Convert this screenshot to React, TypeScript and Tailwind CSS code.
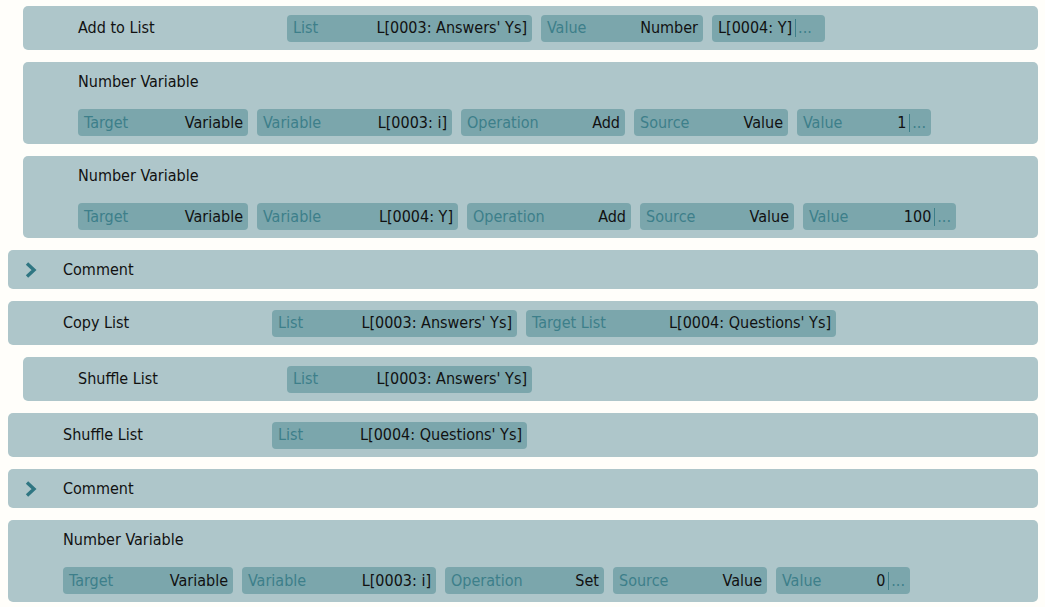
/**
 * Script editor - a list of action blocks with their parameter chips
 */

type Chip = {
  label?: string;
  value: string;
  more?: boolean;
  width: string;
};

type Block =
  | { kind: 'inline'; title: string; nested?: boolean; chips: Chip[] }
  | { kind: 'stacked'; title: string; nested?: boolean; chips: Chip[] }
  | { kind: 'comment'; title: string };

const numberChips = (variable: string, op: string, value: string, widths: string[]): Chip[] => [
  { label: 'Target', value: 'Variable', width: widths[0] },
  { label: 'Variable', value: variable, width: widths[1] },
  { label: 'Operation', value: op, width: widths[2] },
  { label: 'Source', value: 'Value', width: widths[3] },
  { label: 'Value', value, more: true, width: widths[4] },
];

const blocks: Block[] = [
  {
    kind: 'inline',
    title: 'Add to List',
    nested: true,
    chips: [
      { label: 'List', value: "L[0003: Answers' Ys]", width: 'w-[245px]' },
      { label: 'Value', value: 'Number', width: 'w-[162px]' },
      { value: 'L[0004: Y]', more: true, width: 'w-[113px]' },
    ],
  },
  {
    kind: 'stacked',
    title: 'Number Variable',
    nested: true,
    chips: numberChips('L[0003: i]', 'Add', '1', ['w-[170px]', 'w-[195px]', 'w-[164px]', 'w-[154px]', 'w-[134px]']),
  },
  {
    kind: 'stacked',
    title: 'Number Variable',
    nested: true,
    chips: numberChips('L[0004: Y]', 'Add', '100', ['w-[170px]', 'w-[201px]', 'w-[164px]', 'w-[154px]', 'w-[153px]']),
  },
  { kind: 'comment', title: 'Comment' },
  {
    kind: 'inline',
    title: 'Copy List',
    chips: [
      { label: 'List', value: "L[0003: Answers' Ys]", width: 'w-[245px]' },
      { label: 'Target List', value: "L[0004: Questions' Ys]", width: 'w-[310px]' },
    ],
  },
  {
    kind: 'inline',
    title: 'Shuffle List',
    nested: true,
    chips: [{ label: 'List', value: "L[0003: Answers' Ys]", width: 'w-[245px]' }],
  },
  {
    kind: 'inline',
    title: 'Shuffle List',
    chips: [{ label: 'List', value: "L[0004: Questions' Ys]", width: 'w-[255px]' }],
  },
  { kind: 'comment', title: 'Comment' },
  {
    kind: 'stacked',
    title: 'Number Variable',
    chips: numberChips('L[0003: i]', 'Set', '0', ['w-[170px]', 'w-[194px]', 'w-[159px]', 'w-[154px]', 'w-[134px]']),
  },
];

function ParamChip({ chip }: { chip: Chip }) {
  return (
    <div
      className={`${chip.width} h-[27px] shrink-0 flex items-center justify-between rounded-[4px] bg-[#7ba6ac] pl-[6px] pr-[5px] whitespace-nowrap`}
    >
      {chip.label && <span className="text-[#3d7f8a]">{chip.label}</span>}
      <span className="flex items-center text-[#111]">
        {chip.value}
        {chip.more && (
          <>
            <span className="ml-[3px] mr-[2px] h-[18px] w-px bg-[#3d7f8a]" />
            <span className="text-[#3d7f8a]">...</span>
          </>
        )}
      </span>
    </div>
  );
}

function Chevron() {
  return (
    <svg width="12" height="16" viewBox="0 0 12 16" className="shrink-0">
      <polyline points="2,1.5 9,8 2,14.5" fill="none" stroke="#2f7682" strokeWidth="3.4" />
    </svg>
  );
}

function BlockRow({ block }: { block: Block }) {
  if (block.kind === 'comment') {
    return (
      <div className="h-[39px] flex items-center rounded-[5px] bg-[#aec6ca] pl-[17px]">
        <Chevron />
        <span className="ml-[26px] text-[#111]">{block.title}</span>
      </div>
    );
  }

  const indent = block.nested ? 'ml-[15px]' : '';

  if (block.kind === 'inline') {
    return (
      <div className={`${indent} h-[44px] flex items-center rounded-[5px] bg-[#aec6ca] pl-[55px]`}>
        <span className="w-[209px] shrink-0 text-[#111]">{block.title}</span>
        <div className="flex gap-[9px]">
          {block.chips.map((c, i) => (
            <ParamChip key={i} chip={c} />
          ))}
        </div>
      </div>
    );
  }

  return (
    <div className={`${indent} rounded-[5px] bg-[#aec6ca] pl-[55px] pt-[10px] pb-[8px]`}>
      <div className="h-[20px] flex items-center text-[#111]">{block.title}</div>
      <div className="mt-[17px] flex gap-[9px]">
        {block.chips.map((c, i) => (
          <ParamChip key={i} chip={c} />
        ))}
      </div>
    </div>
  );
}

export default function App() {
  return (
    <div
      className="min-h-[607px] w-[1045px] bg-[#fffefa] pt-[6px] pl-[8px] pr-[7px] flex flex-col gap-[12px] text-[16px] leading-[20px]"
      style={{ fontFamily: 'Tahoma, "DejaVu Sans", sans-serif', fontStretch: 'condensed' }}
    >
      {blocks.map((b, i) => (
        <BlockRow key={i} block={b} />
      ))}
    </div>
  );
}
